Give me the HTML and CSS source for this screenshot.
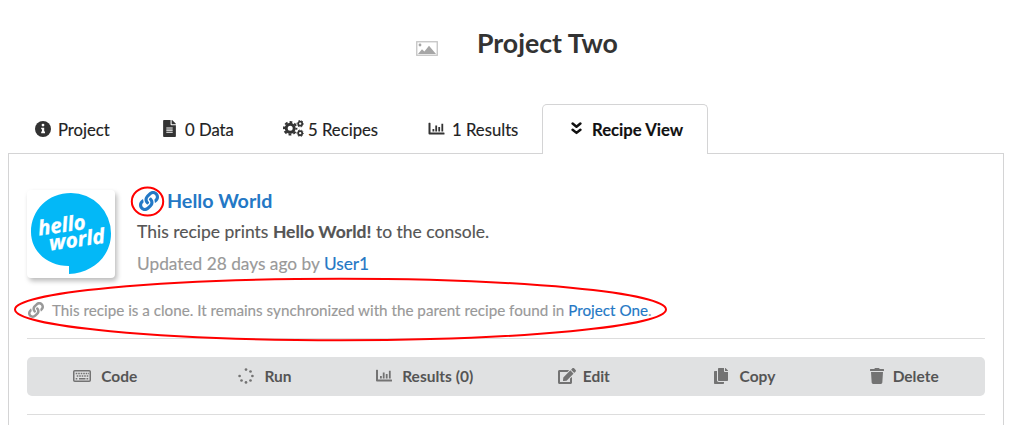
FILE: index.html
```html
<!DOCTYPE html>
<html lang="en">
<head>
<meta charset="utf-8">
<title>Project Two</title>
<link rel="stylesheet" href="styles.css">
</head>
<body>
<svg class="defs" aria-hidden="true">
  <symbol id="link" viewBox="0 0 512 512"><path d="M326.612 185.391c59.747 59.809 58.927 155.698.36 214.59-.11.12-.24.25-.36.37l-67.2 67.2c-59.27 59.27-155.699 59.262-214.96 0-59.27-59.26-59.27-155.7 0-214.96l37.106-37.106c9.84-9.84 26.786-3.3 27.294 10.606.648 17.722 3.826 35.527 9.69 52.721 1.986 5.822.567 12.262-3.783 16.612l-13.087 13.087c-28.026 28.026-28.905 73.66-1.155 101.96 28.024 28.579 74.086 28.749 102.325.51l67.2-67.19c28.191-28.191 28.073-73.757 0-101.83-3.701-3.694-7.429-6.564-10.341-8.569a16.037 16.037 0 0 1-6.947-12.606c-.396-10.567 3.348-21.456 11.698-29.806l21.054-21.055c5.521-5.521 14.182-6.199 20.584-1.731a152.482 152.482 0 0 1 20.522 17.197zM467.547 44.449c-59.261-59.262-155.69-59.27-214.96 0l-67.2 67.2c-.12.12-.25.25-.36.37-58.566 58.892-59.387 154.781.36 214.59a152.454 152.454 0 0 0 20.521 17.196c6.402 4.468 15.064 3.789 20.584-1.731l21.054-21.055c8.35-8.35 12.094-19.239 11.698-29.806a16.037 16.037 0 0 0-6.947-12.606c-2.912-2.005-6.64-4.875-10.341-8.569-28.073-28.073-28.191-73.639 0-101.83l67.2-67.19c28.239-28.239 74.3-28.069 102.325.51 27.75 28.3 26.872 73.934-1.155 101.96l-13.087 13.087c-4.35 4.35-5.769 10.79-3.783 16.612 5.864 17.194 9.042 34.999 9.69 52.721.509 13.906 17.454 20.446 27.294 10.606l37.106-37.106c59.271-59.259 59.271-155.699.001-214.959z"/></symbol>
  <symbol id="chart" viewBox="0 0 16 14"><path d="M0 1.2Q0 .7.5.7H1.5Q2 .7 2 1.2V10.5H15.5Q16 10.5 16 11V12Q16 12.5 15.5 12.5H1Q0 12.5 0 11.5ZM4 7h1.8v2.4H4zM6.8 3.5h1.8v5.9H6.8zM9.8 5h1.8v4.4H9.8zM12.9 1.8h1.8v7.6h-1.8z"/></symbol>
</svg>

<header class="header">
  <svg class="placeholder" viewBox="0 0 22 15"><rect x=".75" y=".75" width="20.5" height="13.5" fill="#fff" stroke="#c4c4c4" stroke-width="1.3"/><circle cx="4" cy="4" r="1.4" fill="#a6a6a6"/><path d="M2 13 6 8.2 8.4 10.4 13 4.8 20 13Z" fill="#a6a6a6"/></svg>
  <h1 class="title">Project Two</h1>
</header>

<nav class="tabs">
  <a class="tab tab-project"><svg class="icon i-info" viewBox="0 0 16 16"><circle cx="8" cy="8" r="8"/><path fill="#fff" d="M8 2.7a1.4 1.4 0 1 1 0 2.8 1.4 1.4 0 0 1 0-2.8zM6.2 6.7h3v3.8h.8v1.7H6.2v-1.7H7V8.3h-.8z"/></svg><span>Project</span></a>
  <a class="tab tab-data"><svg class="icon i-file" viewBox="0 0 384 512"><path d="M224 136V0H24C10.700 0 0 10.700 0 24v464c0 13.300 10.700 24 24 24h336c13.300 0 24-10.700 24-24V160H248c-13.200 0-24-10.800-24-24zM384 121.900v6.100H256V0h6.100c6.400 0 12.500 2.500 17 7l97.900 98c4.500 4.500 7 10.600 7 16.900z"/><path fill="#fff" d="M96 224h192v32H96zM96 288h192v32H96zM96 352h192v32H96z"/></svg><span>0 Data</span></a>
  <a class="tab tab-recipes"><svg class="icon i-cogs" viewBox="0 0 21 17" fill="none" stroke="currentColor"><circle cx="7.200" cy="8.300" r="4" stroke-width="3"/><circle cx="7.200" cy="8.300" r="6.200" stroke-width="2" stroke-dasharray="2.800 2.070" stroke-dashoffset="1.400"/><circle cx="17.200" cy="3.700" r="2" stroke-width="1.700"/><circle cx="17.200" cy="3.700" r="3.200" stroke-width="1" stroke-dasharray="1.700 1.650" stroke-dashoffset=".800"/><circle cx="17.200" cy="13.200" r="2" stroke-width="1.700"/><circle cx="17.200" cy="13.200" r="3.200" stroke-width="1" stroke-dasharray="1.700 1.650" stroke-dashoffset=".800"/></svg><span>5 Recipes</span></a>
  <a class="tab tab-results"><svg class="icon i-chart"><use href="#chart"/></svg><span>1 Results</span></a>
  <a class="tab tab-view active"><svg class="icon i-down" viewBox="0 0 11 13" fill="none" stroke="currentColor" stroke-width="2.500" stroke-linecap="round" stroke-linejoin="round"><path d="M1.600 1.500 5.500 4.700 9.400 1.500M1.600 7.700 5.500 10.900 9.400 7.700"/></svg><span>Recipe View</span></a>
</nav>

<main class="panel">
  <section class="recipe">
    <div class="card">
      <svg class="logo" viewBox="0 0 88 88"><path fill="#03b8f7" d="M44 3a40 40.500 0 0 1 40 40.500C84 66 66 83 42 84V76C20 76 4 61 4 42 4 20 21 3 44 3Z"/><g transform="rotate(-8 44 44)" fill="#fff" font-family="Open Sans, sans-serif" font-size="20.500" font-weight="700" font-style="italic" stroke="#fff" stroke-width=".300"><text x="12" y="41" textLength="48" lengthAdjust="spacingAndGlyphs">hello</text><text x="21" y="57.500" textLength="56" lengthAdjust="spacingAndGlyphs">world</text></g></svg>
    </div>
    <div class="info">
      <h2 class="name"><svg class="icon i-link"><use href="#link"/></svg><a>Hello World</a></h2>
      <p class="desc">This recipe prints <b>Hello World!</b> to the console.</p>
      <p class="meta">Updated 28 days ago by <a>User1</a></p>
    </div>
  </section>
  <p class="note"><svg class="icon i-note"><use href="#link"/></svg><span>This recipe is a clone. It remains synchronized with the parent recipe found in <a>Project One</a>.</span></p>
  <div class="actions">
    <button class="action a-code"><svg class="icon" viewBox="0 0 18 12" width="18" height="12"><rect x=".75" y=".75" width="16.500" height="10.500" rx="1" fill="none" stroke="currentColor" stroke-width="1.500"/><path fill="none" stroke="currentColor" stroke-width="1.600" stroke-dasharray="1.600 .900" d="M2.700 3.500H16M3.700 6H16M2.700 8.700H5"/><path d="M6 8h6.500v1.500H6zM13.500 8h1.700v1.500h-1.700z"/></svg><span>Code</span></button>
    <button class="action a-run"><svg class="icon" viewBox="0 0 16 16" width="16" height="16"><circle cx="8" cy="1.600" r="1.350"/><circle cx="12.500" cy="3.500" r="1.350"/><circle cx="14.400" cy="8" r="1.350"/><circle cx="12.500" cy="12.500" r="1.350"/><circle cx="8" cy="14.400" r="1.350"/><circle cx="3.500" cy="12.500" r="1.350"/><circle cx="1.600" cy="8" r="1.350"/></svg><span>Run</span></button>
    <button class="action a-results"><svg class="icon" width="16" height="14"><use href="#chart"/></svg><span>Results (0)</span></button>
    <button class="action a-edit"><svg class="icon" viewBox="0 0 576 512" width="18" height="16"><path d="M402.600 83.200l90.200 90.200c3.800 3.800 3.800 10 0 13.800L274.400 405.600l-92.800 10.300c-12.400 1.400-22.900-9.100-21.500-21.500l10.300-92.800L388.800 83.200c3.800-3.800 10-3.800 13.800 0zm162-22.900l-48.800-48.800c-15.200-15.200-39.900-15.200-55.200 0l-35.400 35.400c-3.800 3.800-3.800 10 0 13.800l90.200 90.200c3.800 3.800 10 3.800 13.800 0l35.400-35.400c15.200-15.300 15.200-40 0-55.200zM384 346.200V448H64V128h229.800c3.200 0 6.200-1.300 8.500-3.500l40-40c7.600-7.600 2.200-20.500-8.500-20.500H48C21.500 64 0 85.500 0 112v352c0 26.500 21.500 48 48 48h352c26.500 0 48-21.500 48-48V306.200c0-10.700-12.900-16-20.500-8.500l-40 40c-2.200 2.300-3.500 5.300-3.500 8.500z"/></svg><span>Edit</span></button>
    <button class="action a-copy"><svg class="icon" viewBox="0 0 448 512" width="14" height="16"><path d="M320 448v40c0 13.255-10.745 24-24 24H24c-13.255 0-24-10.745-24-24V120c0-13.255 10.745-24 24-24h72v296c0 30.879 25.121 56 56 56h168zm0-344V0H152c-13.255 0-24 10.745-24 24v368c0 13.255 10.745 24 24 24h272c13.255 0 24-10.745 24-24V128H344c-13.200 0-24-10.800-24-24zm120.971-31.029L375.029 7.029A24 24 0 0 0 358.059 0H352v96h96v-6.059a24 24 0 0 0-7.029-16.970z"/></svg><span>Copy</span></button>
    <button class="action a-delete"><svg class="icon" viewBox="0 0 448 512" width="14" height="16"><path d="M432 32H312l-9.400-18.700A24 24 0 0 0 281.100 0H166.800a23.720 23.720 0 0 0-21.400 13.300L136 32H16A16 16 0 0 0 0 48v32a16 16 0 0 0 16 16h416a16 16 0 0 0 16-16V48a16 16 0 0 0-16-16zM53.200 467a48 48 0 0 0 47.900 45h245.800a48 48 0 0 0 47.900-45L416 128H32z"/></svg><span>Delete</span></button>
  </div>
  <div class="rule"></div>
</main>

<svg class="marks" viewBox="0 0 1013 425"><ellipse cx="147.500" cy="201.500" rx="15.700" ry="14"/><ellipse cx="340.500" cy="309.500" rx="325.500" ry="30.700"/></svg>
</body>
</html>
```
FILE: styles.css
```css
* { box-sizing: border-box; }
body {
  margin: 0;
  width: 1013px;
  height: 425px;
  overflow: hidden;
  position: relative;
  background: #fff;
  color: #222;
  font-family: Lato, "Liberation Sans", sans-serif;
}
h1, h2, p { margin: 0; white-space: nowrap; }
.defs { position: absolute; width: 0; height: 0; }
.icon { flex: none; fill: currentColor; }
.icon[fill="none"] { fill: none; }
a { color: #2478c5; }

.header { display: flex; height: 104px; padding: 26px 0 0 416px; }
.placeholder { width: 22px; height: 15px; margin: 15px 39px 0 0; }
.title { font-size: 26.7px; line-height: 34px; font-weight: 700; color: #333; }

.tabs { display: flex; height: 50px; padding-left: 8px; font-size: 16.7px; }
.tab { display: flex; align-items: center; height: 50px; padding-top: 1px; color: #222; white-space: nowrap; -webkit-text-stroke: .15px; }
.tab .icon { color: #333; margin-top: -2px; }
.tab-project { width: 129px; padding-left: 27px; }
.tab-data { width: 123px; padding-left: 26px; }
.tab-recipes { width: 144px; padding-left: 23px; }
.tab-results { width: 138px; padding-left: 24px; }
.tab-view { width: 166px; padding-left: 28px; }
.tab.active {
  padding-top: 0;
  border: 1px solid #d4d4d5;
  border-bottom: 0;
  border-radius: 5px 5px 0 0;
  background: #fff;
  color: #111;
  font-weight: 700;
  position: relative;
  z-index: 1;
}
.tab.active .icon { color: #111; }
.i-info { width: 16px; height: 16px; margin-right: 7px; }
.i-file { width: 13px; height: 17px; margin-right: 9px; }
.i-cogs { width: 21px; height: 17px; margin-right: 4px; }
.i-chart { width: 17px; height: 14px; margin-right: 7px; }
.i-down { width: 11px; height: 13px; margin-right: 10px; }

.panel {
  width: 996px;
  height: 280px;
  margin: -1px 0 0 8px;
  padding: 36px 18px 0;
  border: 1px solid #d4d4d5;
}
.recipe { display: flex; }
.card { width: 88px; height: 88px; border-radius: 4px; box-shadow: 2px 3px 5px #bbb; }
.logo { display: block; width: 88px; height: 88px; }
.info { padding-left: 22px; }
.name { display: flex; align-items: center; height: 22px; font-size: 19.7px; line-height: 22px; }
.name a { margin-top: -1px; }
.i-link { width: 20px; height: 20px; margin: 0 8px 0 2px; color: #2478c5; }
.desc { margin-top: 8px; font-size: 17.5px; line-height: 24px; color: #555; }
.meta { margin-top: 8px; font-size: 17.3px; line-height: 24px; color: #999; }
.desc, .meta, .note { -webkit-text-stroke: .15px; }
.note {
  display: flex;
  align-items: center;
  height: 61px;
  padding: 3px 0 0 1px;
  border-bottom: 1px solid #ddd;
  font-size: 15.22px;
  color: #999;
}
.i-note { width: 16px; height: 16px; margin-right: 8px; }
.actions {
  display: grid;
  grid-template-columns: repeat(6, 1fr);
  height: 39px;
  margin-top: 18px;
  border-radius: 5px;
  background: #e0e1e2;
}
.action {
  display: flex;
  align-items: center;
  justify-content: center;
  gap: 10px;
  padding: 0 3px 0 0;
  border: 0;
  background: none;
  color: #555;
  font: 700 15.5px Lato, sans-serif;
}
.action span { margin-top: -2px; }
.action .icon { color: #737373; margin-top: -1px; }
.a-edit { gap: 7px; padding-right: 4px; }
.a-copy { gap: 12px; padding-right: 2px; }
.a-delete { gap: 9px; padding-right: 2px; }
.rule { height: 1px; margin-top: 18px; background: #ddd; }
.marks { position: absolute; top: 0; left: 0; width: 1013px; height: 425px; pointer-events: none; fill: none; stroke: #f00; stroke-width: 2; }
```
